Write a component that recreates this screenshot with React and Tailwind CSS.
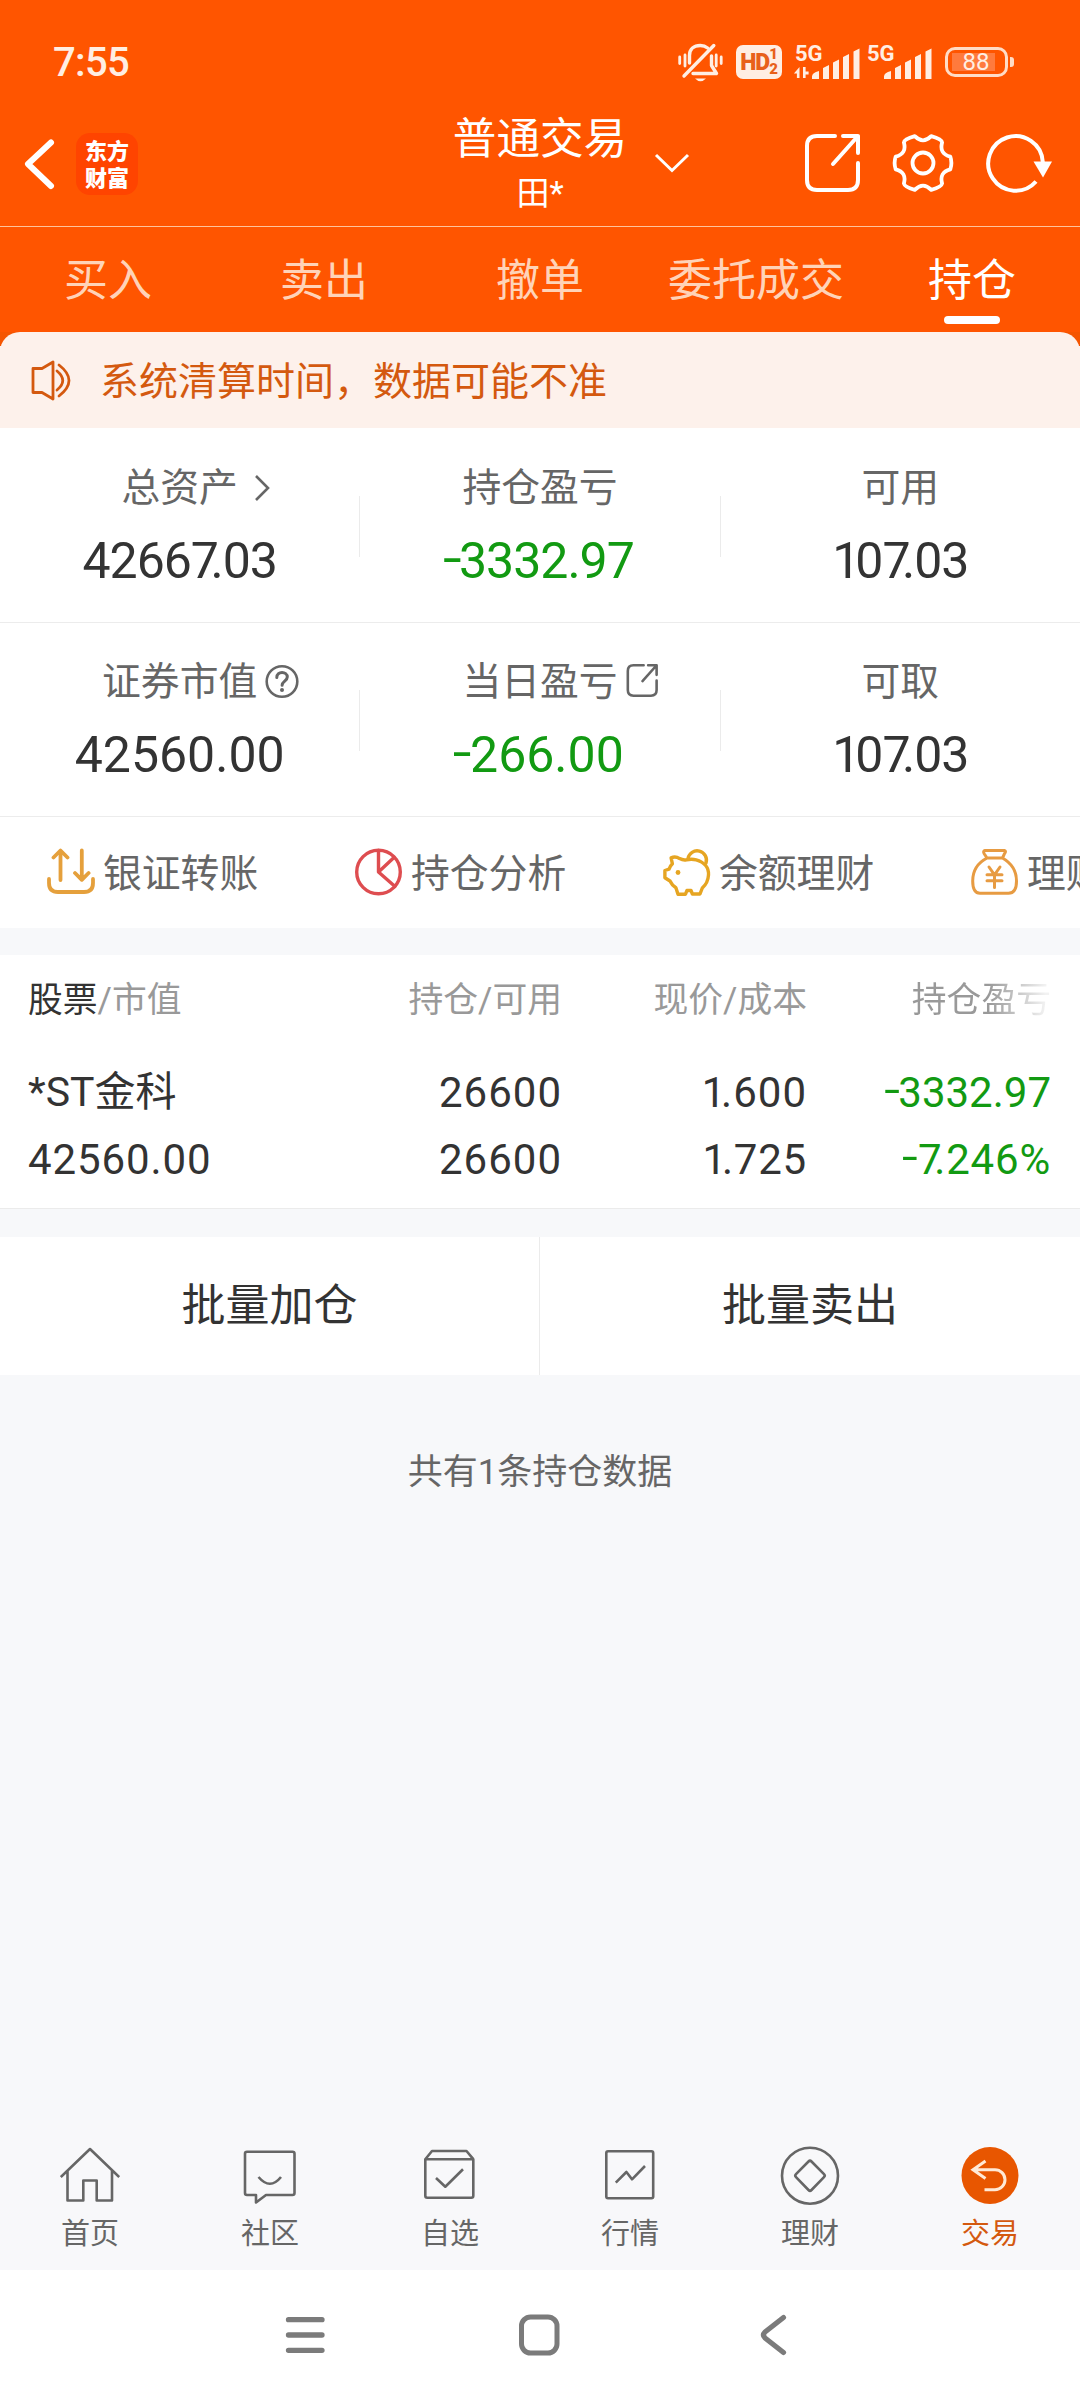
import { Fragment } from 'react'

const summary = [
  [
    { label: '总资产', value: '42667.03', icon: 'arrow', tight: true },
    { label: '持仓盈亏', value: '-3332.97', down: true, tight: true },
    { label: '可用', value: '107.03', tight: true },
  ],
  [
    { label: '证券市值', value: '42560.00', icon: 'help' },
    { label: '当日盈亏', value: '-266.00', icon: 'share', down: true },
    { label: '可取', value: '107.03', tight: true },
  ],
]

const tabs = ['买入', '卖出', '撤单', '委托成交', '持仓']

// Narrow "1" and the "7." pair sit closer than the default digit advance,
// and the minus sign is wider and centred on the digits
function Num({ children }) {
  return children.split(/(7(?=\.)|1|-)/).map((part, i) => {
    if (part === '7') return <span key={i} className="tracking-[-0.17em]">7</span>
    if (part === '1') return <span key={i} className="tracking-[-0.1em]">1</span>
    if (part === '-') {
      return <span key={i} className="inline-block origin-right translate-x-[0.03em] -translate-y-[0.06em] scale-x-[1.35]">-</span>
    }
    return <Fragment key={i}>{part}</Fragment>
  })
}

function Signal({ data }) {
  return (
    <div className="relative h-[36px] w-[65px]">
      <span className="absolute left-0 top-0 text-[22px] leading-[18px] font-bold">5G</span>
      <svg className="absolute inset-0 overflow-visible" width="65" height="36" fill="currentColor">
        {data && (
          <path d="M4.500 22v11h-2.600v-4.500h-3zM8 33v-11h2.600v4.500h3v3h-3v3.500z" />
        )}
        <path d="M17 34v-2.500q0-4 7-5.500v8zM28 34v-11l6-3v14zM38 34v-16.500l6-3v19.500zM48 34v-22l6-3v25zM58.500 34v-27.500l6-3v30.500z" />
      </svg>
    </div>
  )
}

function StatusBar() {
  return (
    <div className="flex h-[100px] items-start pl-[53px] pt-[43px] text-[#ffeee3]">
      <span className="text-[40px] leading-[40px] font-medium tracking-[-0.7px]">7:55</span>
      <div className="ml-auto mr-[66px] flex items-start">
        <svg width="46" height="40" fill="none" stroke="currentColor" strokeWidth="3.400" strokeLinecap="round" strokeLinejoin="round">
          <path d="M12.500 20v-7.500C12.500 6 17 2.500 23.300 2.500c3 0 5.500 1 7.300 2.500M34.500 13v9.500l5 8H16M36.800 2.500L7 33" />
          <path d="M2.700 14v6.500M8 12v11M39.200 12v11M44.200 14v6.500" strokeWidth="2.800" />
          <path d="M18 35.500h11q-5.500 5.500-11 0z" fill="currentColor" stroke="none" />
        </svg>
        <div className="ml-[13px] mt-[2px] flex h-[34px] w-[46px] items-center justify-center rounded-[7px] bg-[#ffeee3] text-[#e8601a]">
          <span className="text-[23px] leading-none font-black tracking-[-1px]">HD</span>
          <span className="flex flex-col text-[15px] leading-[15px] font-black">
            <span>1</span>
            <span>2</span>
          </span>
        </div>
        <div className="ml-[13px] mt-[2px]"><Signal data /></div>
        <div className="ml-[7px] mt-[2px]"><Signal /></div>
        <div className="ml-[13px] mt-[4px] flex h-[30px] w-[63px] items-center rounded-[10px] border-[3px] border-[#ffdcc6] pl-[4px]">
          <div className="flex h-[18px] w-[43px] items-center justify-center bg-[#ff7a3d] pl-[5px] text-[24px] leading-[18px]">88</div>
        </div>
        <div className="ml-[2px] mt-[14px] h-[10px] w-[4px] rounded-r-[3px] bg-[#ffdcc6]" />
      </div>
    </div>
  )
}

function ShareIcon({ className, width }) {
  return (
    <svg className={className} viewBox="0 0 58 62" fill="none" stroke="currentColor" strokeWidth={width} strokeLinecap="round" strokeLinejoin="round">
      <path d="M31 4H13Q3 4 3 14v34q0 10 10 10h31q10 0 10-10V31M39 4h15v17M54 4L29 32" />
    </svg>
  )
}

function Header() {
  return (
    <div className="flex h-[127px] items-start border-b border-[#ffc39b] text-white">
      <svg className="ml-[22px] mt-[36px]" width="36" height="56" fill="none" stroke="currentColor" strokeWidth="6" strokeLinecap="round" strokeLinejoin="round">
        <path d="M29 6.500L6 28l23 22" />
      </svg>
      <div className="ml-[18px] mt-[33px] flex h-[62px] w-[62px] flex-col items-center justify-center rounded-[14px] bg-[#ff4400] font-['Noto_Sans_CJK_SC'] text-[22px] leading-[27px] font-black">
        <span className="-mt-[3px]">东方</span>
        <span>财富</span>
      </div>
      <div className="ml-[314px] mt-[11px] flex w-[176px] flex-col items-center">
        <span className="text-[43.6px] leading-[58px] whitespace-nowrap">普通交易</span>
        <span className="mt-[2px] text-[33px] leading-[46px]">田*</span>
      </div>
      <svg className="ml-[24px] mt-[50px]" width="40" height="26" fill="none" stroke="currentColor" strokeWidth="3">
        <path d="M4 5l16 15.500L36 5" />
      </svg>
      <ShareIcon className="ml-[112px] mt-[32px] h-[62px] w-[58px]" width="4" />
      <svg className="ml-[30px] mt-[32px]" width="62" height="62" viewBox="-31 -31 62 62" fill="none" stroke="currentColor" strokeWidth="3.800" strokeLinejoin="round">
        <path d="M27.300 6.300Q16 9.300 19.100 20.500Q18.500 24 8.200 26.800Q0 18.500-8.200 26.800Q-18.500 24-19.100 20.500Q-16 9.300-27.300 6.300Q-29.500 0-27.300-6.300Q-16-9.300-19.100-20.500Q-18.500-24-8.200-26.800Q0-18.500 8.200-26.800Q18.500-24 19.100-20.500Q16-9.300 27.300-6.300Q29.500 0 27.300 6.300z" />
        <circle r="10.500" />
      </svg>
      <svg className="ml-[31px] mt-[33px]" width="70" height="62" fill="none" stroke="currentColor" strokeWidth="4">
        <path d="M51 48.500A27.300 27.300 0 1 1 57.800 29" />
        <path d="M48.500 28.500h18.500l-9 16z" fill="currentColor" stroke="none" />
      </svg>
    </div>
  )
}

function Tabs() {
  return (
    <div className="grid h-[105px] grid-cols-5">
      {tabs.map((tab, i) => {
        const active = i === tabs.length - 1
        return (
          <div key={tab} className={`flex flex-col items-center pt-[25px] text-[44px] leading-[58px] ${active ? 'text-white' : 'text-[#ffd3b8]'}`}>
            {tab}
            {active && <span className="mt-[6px] h-[8px] w-[56px] rounded-full bg-white" />}
          </div>
        )
      })}
    </div>
  )
}

function Notice() {
  return (
    <div className="bg-[linear-gradient(#f55500_14px,#fdf1eb_14px)]">
      <div className="flex h-[96px] items-start rounded-t-[20px] bg-[#fdf1eb] pl-[31px] text-[#d4590f]">
        <svg className="mt-[28px]" width="40" height="41" fill="none" stroke="currentColor" strokeWidth="2.800" strokeLinejoin="round" strokeLinecap="round">
          <path d="M2 8.500h9L22 2v37L11 32.500H2zM26 11q11.500 9.500 0 19M28 5q20 15.500 0 31" />
        </svg>
        <span className="ml-[29px] mt-[26px] text-[39px] leading-[48px]">系统清算时间，数据可能不准</span>
      </div>
      <div className="h-0 px-[28px]"><div className="h-px bg-[#ebebed]" /></div>
    </div>
  )
}

function LabelIcon({ type }) {
  if (type === 'arrow') {
    return (
      <svg className="absolute left-full top-[7px] ml-[14px]" width="22" height="30" fill="none" stroke="currentColor" strokeWidth="2.600">
        <path d="M4 3l12 12L4 27" />
      </svg>
    )
  }
  if (type === 'help') {
    return (
      <svg className="absolute left-full top-[4px] ml-[7px]" width="36" height="36" fill="none" stroke="currentColor" strokeWidth="2.600" strokeLinecap="round">
        <circle cx="18" cy="17.500" r="15.300" />
        <path d="M12.800 13.500c0-7 10.500-6.500 10.500-.5 0 4-5.200 4.200-5.200 8.300" strokeWidth="3" />
        <circle cx="18" cy="26" r="2" fill="currentColor" stroke="none" />
      </svg>
    )
  }
  if (type === 'share') {
    return <ShareIcon className="absolute left-full top-[3px] ml-[8px] h-[35px] w-[33px]" width="4.600" />
  }
  return null
}

function Summary() {
  return summary.map((row, r) => (
    <div key={r} className="flex h-[194px] items-start border-b border-[#ececec]">
      {row.map((item, i) => (
        <Fragment key={item.label}>
          {i > 0 && <div className="mt-[67px] h-[61px] w-px bg-[#ebebeb]" />}
          <div className="flex flex-1 flex-col items-center pt-[37px]">
            <span className="relative text-[38.8px] leading-[44px] text-[#666]">
              {item.label}
              <LabelIcon type={item.icon} />
            </span>
            <span className={`mt-[21px] text-[50px] leading-[60px] ${item.tight ? 'tracking-[-1px]' : ''} ${item.down ? 'text-[#129a12]' : 'text-[#333]'}`}>
              <Num>{item.value}</Num>
            </span>
          </div>
        </Fragment>
      ))}
    </div>
  ))
}

const actions = [
  {
    name: '银证转账',
    icon: (
      <g stroke="#e5a03c" strokeWidth="3.800">
        <path d="M13.500 32V3M6.500 9.500l7-7 7 7M34.800 2.500v29M28 25l6.800 6.800L41.600 25M2 31v4q0 9 9 9h26q9 0 9-9v-4" />
      </g>
    ),
  },
  {
    name: '持仓分析',
    icon: (
      <g stroke="#de4d50" strokeWidth="3.400">
        <circle cx="23.500" cy="24" r="21.800" />
        <path d="M23.500 2.500V24L39 9.500M23.500 24L40 38.500" />
      </g>
    ),
  },
  {
    name: '余额理财',
    icon: (
      <g stroke="#e6a522" strokeWidth="3.400">
        <path d="M8.100 9.800q4.400-2 8.500.8 3.500 1.800 6.800 1.200 5-1.200 9.800 0C41 14 46 19.500 45.500 27q-.5 8-6.200 13l-2.300 6h-7.600l-1.400-3.500h-4.100L22.500 46.200H15l-2.100-6.500q-4-2.500-5.900-6.700l-5.100-3.300v-7.200l4.100-1.300q.9-3 3.400-5.400z" />
        <path d="M25 10.500a9.300 9.300 0 1 1 18 4.500" />
        <circle cx="15" cy="24.500" r="2.400" fill="#e6a522" stroke="none" />
      </g>
    ),
  },
  {
    name: '理财',
    icon: (
      <g stroke="#e79b42" strokeWidth="3">
        <path d="M14 2.500h19.500q2 .5 0 3.200l-2 4.300h-15.500l-2.800-4.300q-1.500-2.500.8-3.200zM16 10C5.500 15.500 1.700 23 1.700 33c0 9 2.500 12.300 7.300 12.300h28.500c5 0 8-3.300 8-12.300 0-10-4.500-17.500-14-23" />
        <path d="M18 19l5.500 7.800L29 19M23.500 26.800v12.700M16 26.800h15M16 32.800h15" />
      </g>
    ),
  },
]

function QuickActions() {
  return (
    <div className="flex h-[111px] overflow-hidden bg-white">
      {actions.map((a) => (
        <div key={a.name} className="flex w-[308px] shrink-0 items-start pl-[47px] pt-[31px]">
          <svg width="48" height="48" fill="none" strokeLinecap="round" strokeLinejoin="round">{a.icon}</svg>
          <span className="ml-[8px] mt-px whitespace-nowrap text-[38.800px] leading-[50px] text-[#666]">{a.name}</span>
        </div>
      ))}
    </div>
  )
}

function Holdings() {
  const cols = 'grid grid-cols-[1fr_220px_245px_244px] pl-[28px] pr-[29px] text-right'
  return (
    <div className="h-[254px] border-b border-[#ebebeb] bg-white">
      <div className={`${cols} text-[34.8px] leading-[90px] text-[#999]`}>
        <span className="text-left"><span className="text-[#333]">股票</span>/市值</span>
        <span>持仓/可用</span>
        <span>现价/成本</span>
        <span>
          <span className="bg-[linear-gradient(to_right,#999_55%,#f2f2f2_96%)] bg-clip-text text-transparent">持仓盈亏</span>
        </span>
      </div>
      <div className={`${cols} mt-[14px] text-[42px] leading-[67px] text-[#333]`}>
        <span className="text-left text-[41px]">*ST金科</span>
        <span className="tracking-[1px]">26600</span>
        <span className="tracking-[1px]"><Num>1.600</Num></span>
        <span className="text-[#129a12]"><Num>-3332.97</Num></span>
        <span className="text-left tracking-[0.9px]">42560.00</span>
        <span className="tracking-[1px]">26600</span>
        <span className="tracking-[0.8px]"><Num>1.725</Num></span>
        <span className="tracking-[0.8px] text-[#129a12]"><Num>-7.246%</Num></span>
      </div>
    </div>
  )
}

const navItems = [
  { name: '首页', icon: <path d="M.8 31L30 3l29.200 28M7.500 25v29.500h15.800V34.500h13.400v20H52V25" /> },
  { name: '社区', icon: <path d="M7 5.700h45.500q2 0 2 2V47q0 2-2 2H26l-10 7.500V49H7q-2 0-2-2V7.700q0-2 2-2zM18.500 31q11.500 13.500 22.500 0" /> },
  { name: '自选', icon: <path d="M5.300 13.200h48v36.500q0 2-2 2h-44q-2 0-2-2zL12 5h34.500l6.800 8.200M16 32l9.300 8.700L43 23.300" /> },
  { name: '行情', icon: <path d="M8 5.200h43.500q1.700 0 1.700 1.700v43.600q0 1.700-1.700 1.700H8q-1.700 0-1.700-1.700V6.900q0-1.700 1.700-1.700zM15.800 36.700L26.400 26l5.600 7.300L45 20" /> },
  { name: '理财', icon: <path d="M30 1.700a28 28 0 1 1 0 56 28 28 0 1 1 0-56zM28.500 15.500q1.500-1.500 3 0l12.500 12.700q1.500 1.500 0 3L31.500 44q-1.500 1.500-3 0L16 31.200q-1.500-1.500 0-3z" /> },
  { name: '交易', active: true },
]

function BottomNav() {
  return (
    <div className="grid h-[150px] grid-cols-6 bg-[#f8f8fa]">
      {navItems.map((item) => (
        <div key={item.name} className={`flex flex-col items-center pt-[26px] ${item.active ? 'text-[#d4590f]' : 'text-[#666]'}`}>
          <svg width="60" height="60" fill="none" stroke="currentColor" strokeWidth="2.600" strokeLinejoin="round">
            {item.icon}
            {item.active && (
              <>
                <circle cx="30" cy="29.500" r="28.500" fill="#e85600" stroke="none" />
                <path d="M25.500 15L13 23.700l12.500 8.800M13 23.700h22a10 10 0 0 1 0 20H24.500" stroke="#ffe9d6" strokeWidth="3" strokeLinejoin="miter" />
              </>
            )}
          </svg>
          <span className="mt-[8px] text-[29px] leading-[40px]">{item.name}</span>
        </div>
      ))}
    </div>
  )
}

function SystemNav() {
  return (
    <div className="flex h-[130px] items-center bg-white text-[#7b7b7b]">
      <svg className="ml-[283px]" width="44" height="44" fill="none" stroke="currentColor" strokeWidth="5.300" strokeLinecap="round">
        <path d="M5.500 6.700h33.500M5.500 22h33.500M5.500 37.300h33.500" />
      </svg>
      <svg className="ml-[190px]" width="44" height="44" fill="none" stroke="currentColor" strokeWidth="5">
        <rect x="4.500" y="4" width="35.500" height="36" rx="9" />
      </svg>
      <svg className="ml-[191px]" width="44" height="44" fill="none" stroke="currentColor" strokeWidth="5.200" strokeLinecap="round" strokeLinejoin="round">
        <path d="M31.500 4.500L13 19q-3 3 0 6l18.500 14.500" />
      </svg>
    </div>
  )
}

export default function App() {
  return (
    <div lang="zh-CN" className="flex h-[2400px] w-[1080px] flex-col overflow-hidden bg-[#f7f8fa] font-['Roboto','Noto_Sans_CJK_SC',sans-serif]">
      <div className="bg-[#ff5500]">
        <StatusBar />
        <Header />
        <Tabs />
      </div>
      <Notice />
      <div className="bg-white pt-px">
        <Summary />
      </div>
      <QuickActions />
      <div className="mt-[27px]">
        <Holdings />
      </div>
      <div className="mt-[28px] grid h-[138px] grid-cols-2 bg-white text-center text-[44px] leading-[138px] text-[#333]">
        <span className="border-r border-[#ebebeb]">批量加仓</span>
        <span>批量卖出</span>
      </div>
      <p className="mt-[74px] text-center text-[35px] leading-[48px] text-[#666]">共有1条持仓数据</p>
      <div className="mt-auto">
        <BottomNav />
        <SystemNav />
      </div>
    </div>
  )
}
